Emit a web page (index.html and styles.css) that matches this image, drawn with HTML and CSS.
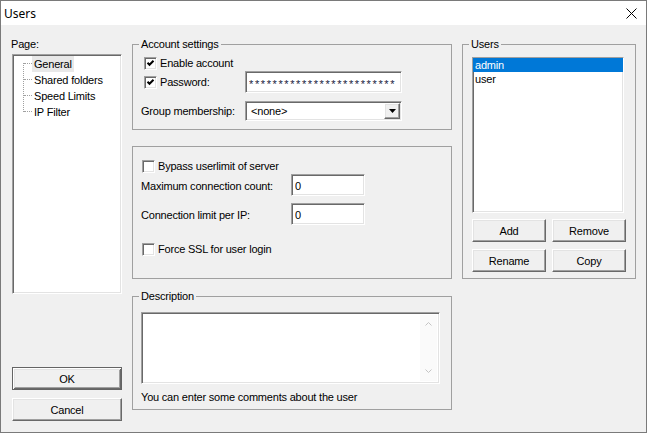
FILE: index.html
```html
<!DOCTYPE html>
<html lang="en">
<head>
    <meta charset="UTF-8">
    <title>Users</title>
    <link rel="stylesheet" href="styles.css">
</head>
<body>
<div class="window">
    <div class="titlebar">
        <span class="title">Users</span>
        <svg class="close" width="11" height="11" viewBox="0 0 11 11">
            <path d="M0.5 0.5L10.5 10.5M10.5 0.5L0.5 10.5" stroke="#000" stroke-width="1" fill="none"/>
        </svg>
    </div>
    <div class="dialog">
        <div class="col-left">
            <div class="page-label">Page:</div>
            <ul class="tree sunken">
                <li><span class="selected">General</span></li>
                <li><span>Shared folders</span></li>
                <li><span>Speed Limits</span></li>
                <li><span>IP Filter</span></li>
            </ul>
            <button class="btn btn-default btn-ok">OK</button>
            <button class="btn raised btn-cancel">Cancel</button>
        </div>

        <div class="col-mid">
            <fieldset class="group account">
                <legend>Account settings</legend>
                <div class="group-body">
                    <div class="check-row">
                        <span class="checkbox sunken"><svg width="9" height="9" viewBox="0 0 9 9"><path d="M1.5 3.8L3.5 5.8L7.5 1.8" stroke="#000" stroke-width="2" fill="none"/></svg></span>
                        <span class="check-label">Enable account</span>
                    </div>
                    <div class="field-row pass-row">
                        <div class="field-label">
                            <span class="checkbox sunken"><svg width="9" height="9" viewBox="0 0 9 9"><path d="M1.5 3.8L3.5 5.8L7.5 1.8" stroke="#000" stroke-width="2" fill="none"/></svg></span>
                            <span class="check-label">Password:</span>
                        </div>
                        <input class="textbox sunken password" type="text" value="*************************">
                    </div>
                    <div class="field-row group-row">
                        <div class="field-label">Group membership:</div>
                        <div class="select sunken">
                            <span class="select-value">&lt;none&gt;</span>
                            <span class="select-btn raised"><svg width="7" height="4" viewBox="0 0 7 4"><polygon points="0,0 7,0 3.5,4" fill="#000"/></svg></span>
                        </div>
                    </div>
                </div>
            </fieldset>

            <fieldset class="group limits">
                <div class="group-body">
                    <div class="check-row">
                        <span class="checkbox sunken"></span>
                        <span class="check-label">Bypass userlimit of server</span>
                    </div>
                    <div class="field-row max-row">
                        <div class="field-label">Maximum connection count:</div>
                        <input class="textbox sunken" type="text" value="0">
                    </div>
                    <div class="field-row ip-row">
                        <div class="field-label">Connection limit per IP:</div>
                        <input class="textbox sunken" type="text" value="0">
                    </div>
                    <div class="check-row ssl-row">
                        <span class="checkbox sunken"></span>
                        <span class="check-label">Force SSL for user login</span>
                    </div>
                </div>
            </fieldset>

            <fieldset class="group description">
                <legend>Description</legend>
                <div class="group-body">
                    <div class="textarea sunken">
                        <div class="scrollbar">
                            <svg width="7" height="4" viewBox="0 0 7 4"><polyline points="0.5,3.5 3.5,0.5 6.5,3.5" stroke="#c4c4c4" fill="none"/></svg>
                            <svg width="7" height="4" viewBox="0 0 7 4"><polyline points="0.5,0.5 3.5,3.5 6.5,0.5" stroke="#c4c4c4" fill="none"/></svg>
                        </div>
                    </div>
                    <div class="note">You can enter some comments about the user</div>
                </div>
            </fieldset>
        </div>

        <div class="col-right">
            <fieldset class="group users">
                <legend>Users</legend>
                <div class="group-body">
                    <ul class="userlist sunken">
                        <li class="selected">admin</li>
                        <li>user</li>
                    </ul>
                    <div class="user-buttons">
                        <button class="btn raised">Add</button>
                        <button class="btn raised">Remove</button>
                        <button class="btn raised">Rename</button>
                        <button class="btn raised">Copy</button>
                    </div>
                </div>
            </fieldset>
        </div>
    </div>
</div>
</body>
</html>
```

FILE: styles.css
```css
body {
    margin: 0;
    font-family: "Liberation Sans", Arial, sans-serif;
    font-size: 11px;
    letter-spacing: -0.2px;
    color: #000;
    background: #fff;
}

.window {
    width: 647px;
    height: 433px;
    box-sizing: border-box;
    border: 1px solid #7a7a7a;
    display: flex;
    flex-direction: column;
}

.titlebar {
    height: 24px;
    flex-shrink: 0;
    background: #fff;
    display: flex;
    align-items: center;
    justify-content: space-between;
    padding: 0 9px 0 3px;
}

.title {
    font-family: "Noto Sans", "Liberation Sans", sans-serif;
    font-size: 12px;
    letter-spacing: 0;
}

.dialog {
    flex: 1;
    background: #f0f0f0;
    display: flex;
    gap: 10px;
    padding: 13px 10px 0 10px;
}

/* shared 3d borders */
.sunken {
    box-sizing: border-box;
    background: #fff;
    border: 1px solid;
    border-color: #a0a0a0 #fff #fff #a0a0a0;
    box-shadow: inset 1px 1px #696969, inset -1px -1px #e3e3e3;
}

.raised {
    box-sizing: border-box;
    background: #f0f0f0;
    border: 1px solid;
    border-color: #fff #696969 #696969 #fff;
    box-shadow: inset -1px -1px #a0a0a0, inset 1px 1px #e3e3e3;
}

.btn {
    font: inherit;
    letter-spacing: inherit;
    color: #000;
    padding: 0;
    height: 23px;
    cursor: pointer;
}

.btn-default {
    box-sizing: border-box;
    background: #f0f0f0;
    border: 1px solid #646464;
    box-shadow: inset 1px 1px #fff, inset -1px -1px #696969, inset 2px 2px #e3e3e3, inset -2px -2px #a0a0a0;
}

/* left column */
.col-left {
    width: 111px;
    display: flex;
    flex-direction: column;
}

.page-label {
    line-height: 13px;
}

.tree {
    position: relative;
    list-style: none;
    margin: 3px 0 0 1px;
    padding: 1px 0 0 19px;
    width: 110px;
    height: 240px;
}

.tree::before {
    content: "";
    position: absolute;
    left: 10px;
    top: 8px;
    height: 49px;
    border-left: 1px dotted #a0a0a0;
}

.tree li {
    position: relative;
    height: 16px;
    line-height: 16px;
}

.tree li::before {
    content: "";
    position: absolute;
    left: -8px;
    top: 7px;
    width: 8px;
    border-top: 1px dotted #a0a0a0;
}

.tree li span {
    display: inline-block;
    padding: 0 2px;
}

.tree li span.selected {
    background: #e8e8e8;
}

.btn-ok {
    width: 110px;
    margin: 73px 0 0 1px;
}

.btn-cancel {
    width: 110px;
    margin: 8px 0 0 1px;
}

/* group boxes */
.col-mid {
    width: 320px;
    display: flex;
    flex-direction: column;
}

.col-right {
    width: 174px;
}

.group {
    margin: 0;
    padding: 0;
    min-width: 0;
    box-sizing: border-box;
    border: 1px solid #a0a0a0;
}

.group legend {
    margin-left: 6px;
    padding: 0 2px;
    line-height: 13px;
}

.account {
    height: 92px;
}

.account .group-body {
    padding: 6px 0 0 8px;
}

.limits {
    height: 133px;
    margin-top: 16px;
}

.limits .group-body {
    padding: 13px 0 0 8px;
}

.description {
    height: 120px;
    margin-top: 11px;
}

.description .group-body {
    padding: 9px 0 0 8px;
}

.users {
    height: 241px;
}

.users .group-body {
    padding: 6px 0 0 9px;
}

/* rows */
.check-row {
    display: flex;
    align-items: center;
    height: 13px;
    line-height: 13px;
}

.checkbox {
    width: 13px;
    height: 13px;
    flex-shrink: 0;
    margin-left: 3px;
    display: flex;
    align-items: center;
    justify-content: center;
}

.limits .checkbox {
    margin-left: 1px;
}

.check-label {
    margin-left: 3px;
}

.field-row {
    display: flex;
    align-items: center;
}

.field-label {
    display: flex;
    align-items: center;
    width: 104px;
    flex-shrink: 0;
    line-height: 13px;
}

.pass-row {
    margin-top: 1px;
}

.group-row {
    margin-top: 8px;
}

.textbox {
    font: inherit;
    letter-spacing: inherit;
    color: #000;
    height: 22px;
    padding: 2px 3px 0;
    outline: none;
}

.password {
    width: 157px;
    letter-spacing: 1.6px;
    padding-top: 4px;
    color: #1a1a40;
}

.select {
    width: 157px;
    height: 20px;
    display: flex;
    align-items: center;
    justify-content: space-between;
    padding: 2px 1px 2px 5px;
}

.select-btn {
    width: 16px;
    height: 16px;
    display: flex;
    align-items: center;
    justify-content: center;
}

.limits .field-label {
    width: 150px;
    padding-top: 3px;
}

.limits .textbox {
    width: 74px;
}

.max-row {
    margin-top: 1px;
}

.ip-row {
    margin-top: 7px;
}

.ssl-row {
    margin-top: 18px;
}

.textarea {
    width: 299px;
    height: 72px;
    display: flex;
    justify-content: flex-end;
    padding: 2px;
}

.scrollbar {
    width: 17px;
    background: #fafafa;
    display: flex;
    flex-direction: column;
    align-items: center;
    justify-content: space-between;
    padding: 7px 0 8px;
    box-sizing: border-box;
}

.note {
    margin-top: 7px;
    line-height: 13px;
}

/* user list */
.userlist {
    list-style: none;
    margin: 0;
    padding: 0;
    width: 152px;
    height: 156px;
}

.userlist li {
    height: 14px;
    line-height: 14px;
    padding-left: 2px;
}

.userlist li.selected {
    background: #0078d7;
    color: #fff;
}

.user-buttons {
    margin-top: 6px;
    display: grid;
    grid-template-columns: 74px 74px;
    column-gap: 6px;
    row-gap: 7px;
}
```
